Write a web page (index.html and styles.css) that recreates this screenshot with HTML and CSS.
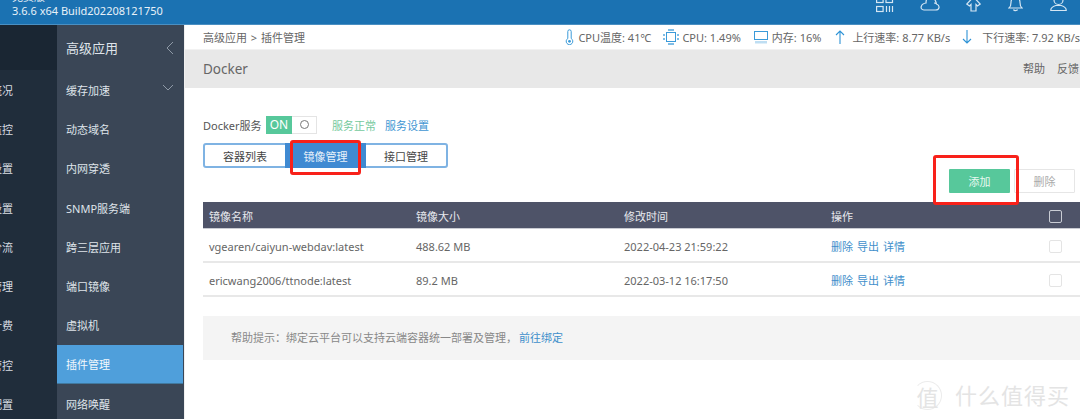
FILE: index.html
```html
<!DOCTYPE html>
<html lang="zh-CN">
<head>
<meta charset="utf-8">
<title>Docker</title>
<link rel="stylesheet" href="styles.css">
</head>
<body>
<header class="topbar">
  <div class="brand">
    <div>免费版</div>
    <div>3.6.6 x64 Build202208121750</div>
  </div>
  <div class="top-icons">
    <svg class="ti ti-1" width="18" height="24" viewBox="0 0 18 24"><g fill="none" stroke="#d5e6f3" stroke-width="1.2"><rect x=".6" y="2" width="6.5" height="6.500"/><rect x="10" y="2" width="6.500" height="6.500"/><rect x=".6" y="12.500" width="6.500" height="5"/><path d="M10.500 12v6M13.500 12v6M16.500 12v6"/></g></svg>
    <svg class="ti ti-2" width="20" height="24" viewBox="0 0 20 24"><path d="M4 16h11.500c4 0 5-4.500 1-6C15 4 12 1 9 2.500 6 4 6 7 6 9 1 9.500-1 15.500 4 16zM14 9c1 0 2 .3 2.500 1" fill="none" stroke="#d5e6f3" stroke-width="1.2"/></svg>
    <svg class="ti ti-3" width="15" height="24" viewBox="0 0 15 24"><path d="M7.500 3 .8 10l2.700 2 1.500-1.500V17h5v-6.500l1.500 1.500 2.700-2z" fill="none" stroke="#d5e6f3" stroke-width="1.200"/></svg>
    <svg class="ti ti-4" width="15" height="24" viewBox="0 0 15 24"><path d="M1 14c2-1.500 2-3 2-5.500 0-3 2-6 4.500-6s4.500 3 4.500 6c0 2.500 0 4 2 5.500zM5.500 15.500c.5 1.500 3.500 1.500 4 0" fill="none" stroke="#d5e6f3" stroke-width="1.200"/></svg>
    <svg class="ti ti-5" width="17" height="24" viewBox="0 0 17 24"><circle cx="8.500" cy="6" r="4.500" fill="none" stroke="#d5e6f3" stroke-width="1.200"/><path d="M.8 16.500v-.5c0-2.500 3.500-4 5-4.500h5.400c1.500.5 5 2 5 4.500v.5z" fill="none" stroke="#d5e6f3" stroke-width="1.200"/></svg>
  </div>
</header>

<div class="layout">
  <nav class="nav-main">
    <div class="nav-main-top"></div>
    <div class="nm-item"><span>系统概况</span></div>
    <div class="nm-item"><span>流量监控</span></div>
    <div class="nm-item"><span>网络设置</span></div>
    <div class="nm-item"><span>安全设置</span></div>
    <div class="nm-item"><span>智能分流</span></div>
    <div class="nm-item"><span>认证管理</span></div>
    <div class="nm-item"><span>上网计费</span></div>
    <div class="nm-item"><span>行为管控</span></div>
    <div class="nm-item"><span>高级配置</span></div>
  </nav>
  <nav class="nav-sub">
    <div class="ns-title">
      <span>高级应用</span>
      <svg width="8" height="14" viewBox="0 0 8 14"><path d="M7 1 1 7l6 6" fill="none" stroke="#8e99a6" stroke-width="1"/></svg>
    </div>
    <div class="ns-item ns-open">
      <span>缓存加速</span>
      <svg class="chev" width="12" height="8" viewBox="0 0 12 8"><path d="m1 1 5 5 5-5" fill="none" stroke="#8e99a6" stroke-width="1"/></svg>
    </div>
    <div class="ns-item">动态域名</div>
    <div class="ns-item">内网穿透</div>
    <div class="ns-item">SNMP服务端</div>
    <div class="ns-item">跨三层应用</div>
    <div class="ns-item">端口镜像</div>
    <div class="ns-item">虚拟机</div>
    <div class="ns-item ns-active">插件管理</div>
    <div class="ns-item">网络唤醒</div>
  </nav>

  <main class="main">
    <div class="status">
      <div class="crumb">高级应用 &gt; 插件管理</div>
      <div class="stats">
        <span class="stat s-temp"><svg width="9" height="16" viewBox="0 0 9 16"><path d="M2.800 9.500V2.500a1.700 1.700 0 0 1 3.400 0v7a3.300 3.300 0 1 1-3.400 0z" fill="none" stroke="#3a9ad9" stroke-width="1"/><circle cx="4.500" cy="12.300" r="1.400" fill="#3a9ad9"/></svg>CPU温度: 41℃</span>
        <span class="stat s-cpu"><svg width="16" height="16" viewBox="0 0 16 16"><rect x="3.500" y="3.500" width="9" height="9" fill="none" stroke="#3a9ad9"/><path d="M5 0h6v2H5zM5 14h6v2H5zM0 5h2v2H0zM0 9h2v2H0zM14 5h2v2h-2zM14 9h2v2h-2z" fill="#7fbde6"/></svg>CPU: 1.49%</span>
        <span class="stat s-mem"><svg width="14" height="14" viewBox="0 0 14 14"><rect x=".5" y="1.500" width="13" height="8" fill="none" stroke="#3a9ad9"/><path d="M2 11v2.500M4 11v2.500M6 11v2.500M8 11v2.500M10 11v2.500M12 11v2.500" stroke="#7fbde6"/></svg>内存: 16%</span>
        <span class="stat s-up"><svg width="10" height="14" viewBox="0 0 10 14"><path d="M5 14V1M1 5l4-4 4 4" fill="none" stroke="#2e93d6" stroke-width="1.100"/></svg>上行速率: 8.77 KB/s</span>
        <span class="stat s-down"><svg width="10" height="14" viewBox="0 0 10 14"><path d="M5 0v13M1 9l4 4 4-4" fill="none" stroke="#2e93d6" stroke-width="1.100"/></svg>下行速率: 7.92 KB/s</span>
      </div>
    </div>
    <div class="titlebar">
      <span class="page-title">Docker</span>
      <span class="title-links"><span>帮助</span><span>反馈</span></span>
    </div>

    <section class="content">
      <div class="service">
        <span class="service-label">Docker服务</span>
        <span class="switch"><span class="sw-on">ON</span><span class="sw-off"><i class="sw-dot"></i></span></span>
        <span class="ok">服务正常</span>
        <span class="link">服务设置</span>
      </div>
      <div class="tabs">
        <span class="tab">容器列表</span>
        <span class="tab tab-active">镜像管理</span>
        <span class="tab">接口管理</span>
      </div>
      <div class="actions">
        <span class="btn btn-add">添加</span>
        <span class="btn btn-del">删除</span>
      </div>
      <div class="table">
        <div class="row row-head">
          <span class="c1">镜像名称</span><span class="c2">镜像大小</span><span class="c3">修改时间</span><span class="c4">操作</span><span class="c5"><i class="check check-head"></i></span>
        </div>
        <div class="row">
          <span class="c1">vgearen/caiyun-webdav:latest</span><span class="c2">488.62 MB</span><span class="c3">2022-04-23 21:59:22</span><span class="c4 ops"><a>删除</a><a>导出</a><a>详情</a></span><span class="c5"><i class="check"></i></span>
        </div>
        <div class="row">
          <span class="c1">ericwang2006/ttnode:latest</span><span class="c2">89.2 MB</span><span class="c3">2022-03-12 16:17:50</span><span class="c4 ops"><a>删除</a><a>导出</a><a>详情</a></span><span class="c5"><i class="check"></i></span>
        </div>
      </div>
      <div class="help"><span>帮助提示：绑定云平台可以支持云端容器统一部署及管理，</span><a>前往绑定</a></div>
    </section>
  </main>
</div>

<div class="mark mark-tab"></div>
<div class="mark mark-add"></div>
<div class="watermark"><span class="wm-circle">值</span><span class="wm-text">什么值得买</span></div>
</body>
</html>
```
FILE: styles.css
```css
* { box-sizing: border-box; }
html, body { margin: 0; height: 419px; overflow: hidden; }
body {
  position: relative;
  width: 1080px;
  font-family: "Noto Sans", "Noto Sans CJK SC", sans-serif;
  font-size: 11px;
  color: #555;
  background: #fff;
}
i { display: block; font-style: normal; }

.topbar {
  height: 25px;
  background: #1b72b2;
  border-bottom: 1px solid #4a8fc2;
  display: flex;
  justify-content: space-between;
  overflow: hidden;
  position: relative;
}
.brand {
  margin-left: 12px;
  margin-top: -10px;
  color: #e8f1f8;
  font-size: 11px;
  line-height: 14px;
  white-space: nowrap;
}
.top-icons { position: relative; width: 210px; height: 24px; margin-top: -6px; }
.ti { position: absolute; top: 0; }
.ti-1 { left: 6px; }
.ti-2 { left: 50px; }
.ti-3 { left: 96px; }
.ti-4 { left: 138px; }
.ti-5 { left: 180px; }

.layout { display: flex; height: 394px; }

.nav-main { width: 57px; background: #202d3b; flex: none; }
.nav-main-top { height: 45px; background: #1a2633; }
.nm-item {
  height: 39.3px;
  display: flex;
  justify-content: flex-end;
  align-items: center;
  padding-right: 44px;
  overflow: hidden;
  white-space: nowrap;
  color: #d8dde3;
}
.nm-item span { flex: none; }

.nav-sub {
  width: 127px;
  flex: none;
  background: #3a4656;
  color: #dfe4ea;
  border-right: 1px solid #3a4656;
}
.ns-title {
  height: 45px;
  padding: 0 9px;
  display: flex;
  justify-content: space-between;
  align-items: center;
  font-size: 13px;
}
.ns-item {
  height: 39.3px;
  padding: 0 9px;
  display: flex;
  align-items: center;
}
.ns-open { justify-content: space-between; }
.chev { margin-bottom: 4px; }
.ns-active { background: #4f9fdb; color: #f2f8fd; border-bottom: 1px solid #41799f; }

.main { flex: 1; min-width: 0; border-left: 1px solid #f0f0f0; }

.status {
  height: 25px;
  display: flex;
  justify-content: space-between;
  align-items: center;
  padding-left: 18px;
  white-space: nowrap;
  overflow: hidden;
  border-bottom: 1px solid #f2f2f2;
}
.crumb { color: #666; word-spacing: 1px; padding-bottom: 1px; }
.stats { display: flex; align-items: center; color: #666; }
.stat { display: inline-flex; align-items: center; }
.s-temp svg { margin-right: 4px; }
.s-cpu { margin-left: 12px; }
.s-cpu svg { margin-right: 3px; }
.s-mem { margin-left: 13px; }
.s-mem svg { margin-right: 4px; }
.s-up { margin-left: 14px; }
.s-up svg { margin-right: 7px; }
.s-down { margin-left: 12px; }
.s-down svg { margin-right: 10px; }

.titlebar {
  height: 38px;
  background: #e8e8e8;
  display: flex;
  justify-content: space-between;
  align-items: center;
  padding: 0 1px 0 18px;
}
.page-title { font-size: 13.5px; color: #666; }
.title-links { display: flex; gap: 12px; color: #666; padding-bottom: 2px; }

.content { padding: 27px 0 0 18px; }

.service { height: 19px; display: flex; align-items: center; color: #555; }
.service-label { width: 63px; }
.switch { width: 51px; height: 18px; display: flex; border: 1px solid #e4e4e4; }
.sw-on {
  width: 26px;
  margin: -1px 0 -1px -1px;
  background: #57c89b;
  color: #fff;
  font-size: 12px;
  text-align: center;
  line-height: 18px;
}
.sw-off { flex: 1; display: flex; align-items: center; justify-content: center; }
.sw-dot { width: 9px; height: 9px; border: 1px solid #777; border-radius: 50%; }
.ok { margin-left: 15px; color: #74c99d; }
.link { margin-left: 9px; color: #3f96d3; }

.tabs {
  margin-top: 9px;
  width: 245px;
  height: 25px;
  display: flex;
  border: 2px solid #7fb3e3;
  border-radius: 3px;
}
.tab { flex: 1; display: flex; align-items: center; justify-content: center; color: #444; }
.tab-active {
  background: #3f8ad2;
  color: #e9f2fa;
  flex: none;
  width: 81px;
  margin: -2px 0;
}

.actions {
  margin-top: 1px;
  height: 24px;
  display: flex;
  justify-content: flex-end;
  gap: 4px;
  padding-right: 5px;
}
.btn {
  width: 61px;
  display: flex;
  align-items: center;
  justify-content: center;
  border-radius: 1px;
}
.btn-add { background: #57c89b; color: #e9f8f1; }
.btn-del { background: #fff; border: 1px solid #e6e6e6; color: #aaa; }

.table { margin-top: 9px; }
.row {
  height: 34px;
  display: flex;
  align-items: center;
  border-bottom: 2px solid #e8e8e8;
  padding: 2px 0 0 6px;
  color: #666;
}
.row-head {
  height: 27px;
  background: #4e5368;
  border-bottom: 1px solid #c9cbd2;
  color: #e8e9ee;
}
.c1 { width: 207px; }
.c2 { width: 208px; }
.c3 { width: 207px; }
.c4 { width: 218px; }
.c5 { width: 13px; }
.ops { display: flex; gap: 4px; }
.ops a, .help a { color: #3f8fcb; }
.check { width: 13px; height: 13px; border: 1px solid #e4e4e4; border-radius: 2px; background: #fff; }
.check-head { background: transparent; border-color: #c9ccd4; }

.help {
  margin-top: 19px;
  height: 44px;
  background: #f4f4f4;
  display: flex;
  align-items: center;
  gap: 2px;
  padding: 0 0 2px 28px;
  color: #888;
}

.mark { position: absolute; border: 3px solid #f8211a; border-radius: 3px; }
.mark-tab { left: 290px; top: 140px; width: 71px; height: 35px; }
.mark-add { left: 933px; top: 155px; width: 86px; height: 50px; }

.watermark {
  position: absolute;
  left: 913px;
  top: 381px;
  display: flex;
  align-items: center;
  gap: 13px;
  color: #e4e4e4;
}
.wm-circle {
  width: 29px;
  height: 29px;
  border-radius: 50%;
  border: 1px solid #ececec;
  border-left-color: transparent;
  display: flex;
  align-items: center;
  justify-content: center;
  font-size: 22px;
}
.wm-text { font-size: 22px; line-height: 29px; letter-spacing: 1px; }
```
